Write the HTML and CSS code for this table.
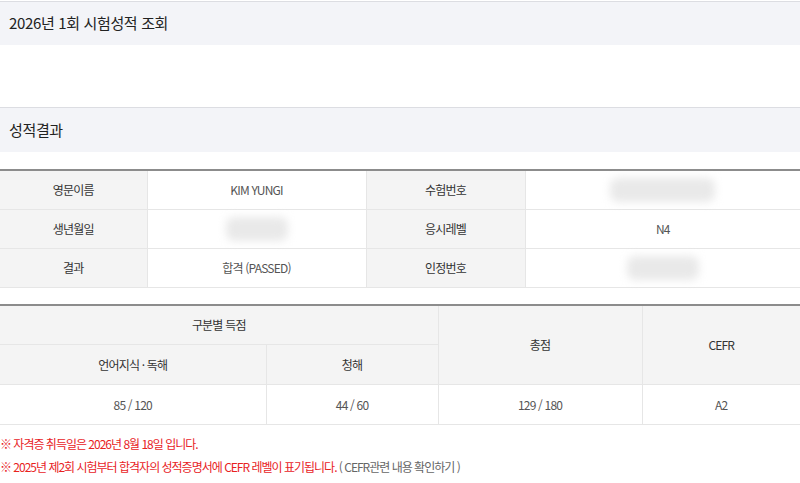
FILE: index.html
```html
<!DOCTYPE html>
<html lang="ko">
<head>
<meta charset="utf-8">
<link rel="stylesheet" href="styles.css">
</head>
<body>
<div class="page">
  <h2 class="sec-title">2026년 1회 시험성적 조회</h2>
  <div class="spacer"></div>
  <h3 class="sec-title">성적결과</h3>

  <table class="info">
    <colgroup>
      <col class="c1"><col class="c2"><col class="c3"><col class="c4">
    </colgroup>
    <tr>
      <th>영문이름</th><td>KIM YUNGI</td>
      <th>수험번호</th><td><span class="blur b-wide"></span></td>
    </tr>
    <tr>
      <th>생년월일</th><td><span class="blur b-mid"></span></td>
      <th>응시레벨</th><td>N4</td>
    </tr>
    <tr>
      <th>결과</th><td>합격 (PASSED)</td>
      <th>인정번호</th><td><span class="blur b-mid2"></span></td>
    </tr>
  </table>

  <table class="score">
    <colgroup>
      <col class="s1"><col class="s2"><col class="s3"><col class="s4">
    </colgroup>
    <tr>
      <th colspan="2">구분별 득점</th>
      <th rowspan="2">총점</th>
      <th rowspan="2">CEFR</th>
    </tr>
    <tr>
      <th>언어지식 · 독해</th>
      <th>청해</th>
    </tr>
    <tr>
      <td>85 / 120</td>
      <td>44 / 60</td>
      <td>129 / 180</td>
      <td>A2</td>
    </tr>
  </table>

  <ul class="notes">
    <li>※ 자격증 취득일은 2026년 8월 18일 입니다.</li>
    <li>※ 2025년 제2회 시험부터 합격자의 성적증명서에 CEFR 레벨이 표기됩니다. <a class="link">( CEFR관련 내용 확인하기 )</a></li>
  </ul>
</div>
</body>
</html>
```

FILE: styles.css
```css
html, body {
  margin: 0;
  padding: 0;
  background: #fff;
}
body {
  font-family: "Noto Sans CJK KR", "Noto Sans", sans-serif;
  color: #333;
  padding-top: 1px;
}
.page {
  width: 800px;
}
.sec-title {
  margin: 0;
  height: 43px;
  line-height: 42px;
  border-top: 1px solid #dcdde2;
  background: #f3f4f8;
  padding-left: 9px;
  font-size: 15px;
  font-weight: 400;
  color: #222;
  letter-spacing: -0.35px;
}
.spacer {
  height: 62px;
}
h3.sec-title {
  height: 44px;
  line-height: 44px;
}
table {
  width: 800px;
  border-collapse: collapse;
  table-layout: fixed;
  font-size: 12px;
  letter-spacing: -0.8px;
  border-top: 2px solid #8c8c8c;
}
.info {
  margin-top: 17px;
}
.c1 { width: 147px; }
.c2 { width: 219px; }
.c3 { width: 159px; }
.c4 { width: 275px; }
th, td {
  border: 1px solid #e6e6e6;
  text-align: center;
  font-weight: 400;
  padding: 0;
}
tr > :first-child { border-left: 0; }
tr > :last-child { border-right: 0; }
th {
  background: #f4f4f4;
  color: #333;
}
td {
  color: #555;
}
.info tr { height: 39px; }
.blur {
  display: inline-block;
  vertical-align: middle;
  height: 24px;
  background: #e9e9e9;
  border-radius: 8px;
  filter: blur(4px);
}
.b-wide { width: 105px; }
.b-mid { width: 62px; }
.b-mid2 { width: 72px; }

.score {
  margin-top: 16px;
}
.s1 { width: 266px; }
.s2 { width: 172px; }
.s3 { width: 204px; }
.s4 { width: 158px; }
.score tr { height: 40px; }

.notes {
  list-style: none;
  margin: 7px 0 0;
  padding: 0;
  font-size: 12px;
  letter-spacing: -1px;
  color: #e8231f;
}
.notes li {
  height: 23px;
  line-height: 23px;
}
.link {
  color: #666;
}
```
